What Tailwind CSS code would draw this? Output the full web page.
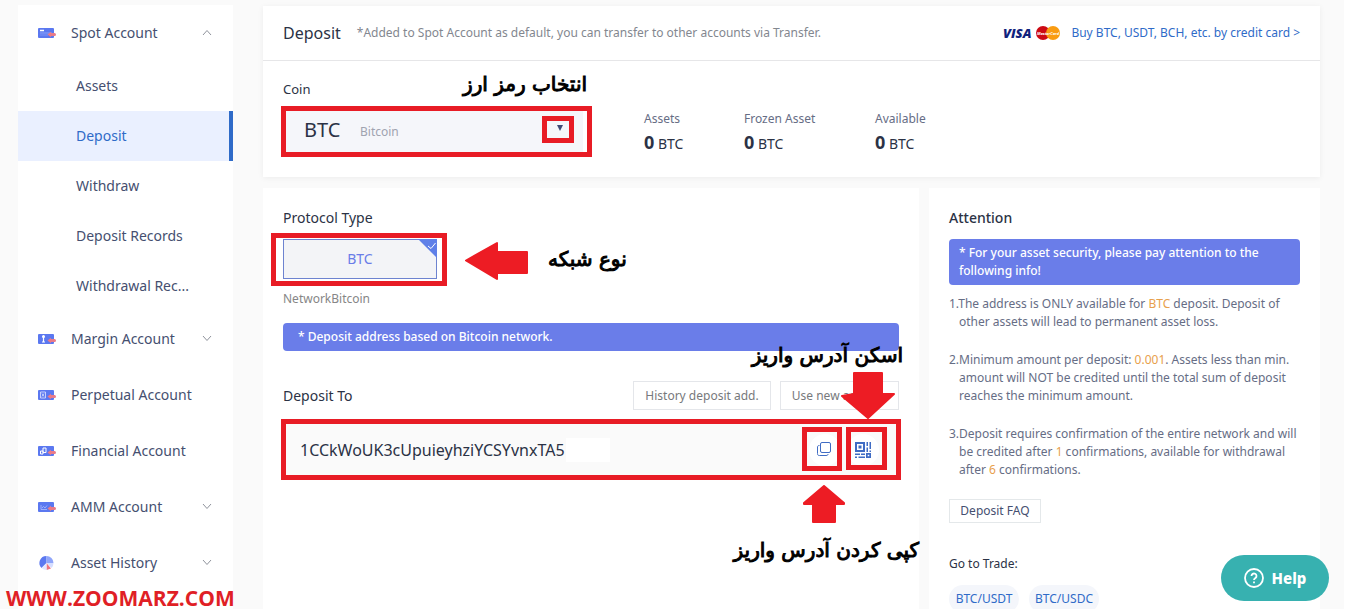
<!DOCTYPE html>
<html lang="en">
<head>
  <meta charset="UTF-8" />
  <meta name="viewport" content="width=device-width, initial-scale=1.0" />
  <title>Deposit - Spot Account</title>
  <script src="https://cdn.jsdelivr.net/npm/@tailwindcss/browser@4"></script>
</head>
<body class="bg-white font-['Noto_Sans','Open_Sans',sans-serif] text-[#2b3245]">
  <div class="relative flex h-screen overflow-hidden mr-3 bg-[#fafafa] pl-[18px] pr-6 gap-[30px]">

    <!-- Sidebar -->
    <nav class="w-[215px] shrink-0 mt-[5px] bg-white text-sm text-[#454f70]">
      <a href="#" class="flex items-center h-14 pl-5 pr-[21px]">
        <svg class="w-[18px] h-3 mr-[15px]" viewBox="0 0 18 12"><rect y="1" width="16" height="10" rx="1" fill="#5b78f0"/><path d="M2 3.500h4" stroke="#fff" stroke-width="1.500"/><path d="M2 6h12" stroke="#8ba2fa"/><path d="M2 8h8" stroke="#7c94f7"/><path d="M9.500 7.500L13 4.800V6h3.500a1.500 1.500 0 010 3H13v1.200z" fill="#e97b88"/></svg>
        Spot Account
        <svg class="ml-auto w-2.5 h-2.5" viewBox="0 0 10 10" fill="none" stroke="#8f939c"><path d="M1 7l4-4.500L9 7"/></svg>
      </a>
      <a href="#" class="flex items-center h-[50px] pl-[58px]">Assets</a>
      <a href="#" class="flex items-center h-[50px] pl-[58px] bg-[#eaf0ff] text-[#2f6bc8] border-r-4 border-[#2f6bc8]">Deposit</a>
      <a href="#" class="flex items-center h-[50px] pl-[58px]">Withdraw</a>
      <a href="#" class="flex items-center h-[50px] pl-[58px]">Deposit Records</a>
      <a href="#" class="flex items-center h-[50px] pl-[58px]">Withdrawal Rec...</a>
      <a href="#" class="flex items-center h-14 pl-5 pr-[21px]">
        <svg class="w-[18px] h-3 mr-[15px]" viewBox="0 0 18 12"><rect y="1" width="16" height="10" rx="1" fill="#5b78f0"/><path d="M5.500 3v6M4 9h3" stroke="#fff" stroke-width="1.200"/><circle cx="5.500" cy="3.500" r="1.500" fill="#fff"/><path d="M9.500 7.500L13 4.800V6h3.500a1.500 1.500 0 010 3H13v1.200z" fill="#e97b88"/></svg>
        Margin Account
        <svg class="ml-auto w-2.5 h-2.5" viewBox="0 0 10 10" fill="none" stroke="#8f939c"><path d="M1 2l4 4.500L9 2"/></svg>
      </a>
      <a href="#" class="flex items-center h-14 pl-5 pr-[21px]">
        <svg class="w-[18px] h-3 mr-[15px]" viewBox="0 0 18 12"><rect y="1" width="16" height="10" rx="1" fill="#5b78f0"/><path d="M2.500 3h5v6h-5zM4 4.500l2 3M6 4.500l-2 3" fill="none" stroke="#dfe5ff" stroke-width=".8"/><path d="M9.500 7.500L13 4.800V6h3.500a1.500 1.500 0 010 3H13v1.200z" fill="#e97b88"/></svg>
        Perpetual Account
      </a>
      <a href="#" class="flex items-center h-14 pl-5 pr-[21px]">
        <svg class="w-[18px] h-3 mr-[15px]" viewBox="0 0 18 12"><rect y="1" width="16" height="10" rx="1" fill="#5b78f0"/><path d="M5 3h3v4.500H5zM2.500 6H5v3H2.500z" fill="none" stroke="#fff"/><path d="M9.500 7.500L13 4.800V6h3.500a1.500 1.500 0 010 3H13v1.200z" fill="#e97b88"/></svg>
        Financial Account
      </a>
      <a href="#" class="flex items-center h-14 pl-5 pr-[21px]">
        <svg class="w-[18px] h-3 mr-[15px]" viewBox="0 0 18 12"><rect y="1" width="16" height="10" rx="1" fill="#5b78f0"/><path d="M3 4v4.500h6M4 7l1.500-1.500L7 7l2-2.500" fill="none" stroke="#b9c6ff" stroke-width=".7"/><path d="M9.500 7.500L13 4.800V6h3.500a1.500 1.500 0 010 3H13v1.200z" fill="#e97b88"/></svg>
        AMM Account
        <svg class="ml-auto w-2.5 h-2.5" viewBox="0 0 10 10" fill="none" stroke="#8f939c"><path d="M1 2l4 4.500L9 2"/></svg>
      </a>
      <a href="#" class="flex items-center h-14 pl-5 pr-[21px]">
        <svg class="w-[18px] h-4 mr-[15px]" viewBox="0 0 18 16"><path d="M8.500 8V1a7 7 0 00-5 12z" fill="#5b78f0"/><path d="M8.500 8V1a7 7 0 017 7z" fill="#8fa5fa"/><path d="M8.500 8h7a7 7 0 01-2 5z" fill="#d5ddff"/><path d="M8.500 8l4.500 5.500-4.500 1.500z" fill="#ee7480"/><path d="M8.500 8v7a7 7 0 01-5-2z" fill="#e3e8ff"/></svg>
        Asset History
        <svg class="ml-auto w-2.5 h-2.5" viewBox="0 0 10 10" fill="none" stroke="#8f939c"><path d="M1 2l4 4.500L9 2"/></svg>
      </a>
    </nav>

    <main class="flex flex-col flex-1 min-w-0 pt-1.5 gap-[11px]">
      <!-- Coin and balances -->
      <section class="bg-white h-[171px] shrink-0 shadow-[0_1px_6px_rgba(0,0,0,0.06)]">
        <header class="flex items-center h-[55px] px-5 border-b border-[#e6e6e8] text-xs">
          <h1 class="text-base">Deposit</h1>
          <p class="ml-4 text-[#83878f]">*Added to Spot Account as default, you can transfer to other accounts via Transfer.</p>
          <svg class="ml-auto w-[58px] h-4" viewBox="0 0 58 16">
            <text x="0" y="13" font-family="Open Sans" font-size="13" font-weight="800" font-style="italic" fill="#10227c">VISA</text>
            <circle cx="40" cy="8" r="7" fill="#cc0a14"/><circle cx="50" cy="8" r="7" fill="#f99c12"/>
            <text x="45" y="10" text-anchor="middle" font-family="Open Sans" font-size="4" font-weight="700" font-style="italic" fill="#fff">MasterCard</text>
          </svg>
          <a href="#" class="ml-2.5 text-[#2f6bc8]">Buy BTC, USDT, BCH, etc. by credit card &gt;</a>
        </header>
        <div class="flex px-5">
          <div class="w-[300px] mt-[19px]">
            <label for="coin" class="block text-[13px] leading-[18px]">Coin</label>
            <div class="relative flex items-center h-11 mt-3 bg-[#f5f6fa] pl-[21px]">
              <select id="coin" class="appearance-none w-14 bg-transparent text-xl leading-7 pb-1"><option>BTC</option></select>
              <span class="text-xs text-[#a0a3b0]">Bitcoin</span>
              <span class="ml-auto mr-5 border-x-[3px] border-x-transparent border-t-[6px] border-t-[#3f4a75] -mt-2"></span>
              <span class="absolute -left-0.5 -top-1 w-[311px] h-[51px] border-5 border-[#e81c25]"></span>
              <span class="absolute left-[259px] top-1.5 w-8 h-[27px] border-5 border-[#e81c25]"></span>
              <span dir="rtl" lang="fa" class="absolute -right-1 -top-10 font-['DejaVu_Sans',sans-serif] text-xl text-black whitespace-nowrap [-webkit-text-stroke:1px_black]">انتخاب رمز ارز</span>
            </div>
          </div>
          <dl class="flex mt-[49px] ml-[61px] text-xs leading-[18px] text-[#666d85]">
            <div class="w-[100px]"><dt>Assets</dt><dd class="text-sm leading-7 text-[#2b3245]"><b class="text-lg leading-7">0</b> BTC</dd></div>
            <div class="w-[131px]"><dt>Frozen Asset</dt><dd class="text-sm leading-7 text-[#2b3245]"><b class="text-lg leading-7">0</b> BTC</dd></div>
            <div><dt>Available</dt><dd class="text-sm leading-7 text-[#2b3245]"><b class="text-lg leading-7">0</b> BTC</dd></div>
          </dl>
        </div>
      </section>

      <div class="flex flex-1 gap-2.5">
        <!-- Deposit address -->
        <section class="relative flex-1 bg-white px-5 pt-5">
          <h2 class="text-sm">Protocol Type</h2>
          <div class="relative w-[154px] mt-[11px]">
            <button class="block w-full h-10 bg-[#f3f4f7] border border-[#6d83d0] text-sm text-[#6a7ce8]">BTC</button>
            <svg class="absolute top-0 right-0 w-5 h-5" viewBox="0 0 20 20"><path d="M1 0h19v19z" fill="#5f80e8"/><path d="M11 7l3 2.500L18.500 4" fill="none" stroke="#fff"/></svg>
            <span class="absolute -left-3 -top-1.5 w-[176px] h-[53px] border-5 border-[#e81c25]"></span>
            <svg class="absolute left-[181px] top-0.5 w-16 h-10" viewBox="0 0 64 40"><path d="M2 19.500L33 2v9h30v21H33v6z" fill="#ed1c24" stroke="#ed1c24" stroke-width="2" stroke-linejoin="round"/></svg>
            <span dir="rtl" lang="fa" class="absolute left-[265px] top-1.5 font-['DejaVu_Sans',sans-serif] text-xl text-black whitespace-nowrap [-webkit-text-stroke:1px_black]">نوع شبکه</span>
          </div>
          <p class="mt-[11px] text-xs leading-[18px] text-[#868686]">NetworkBitcoin</p>
          <p class="mt-[15px] h-7 px-[15px] rounded-sm bg-[#6a7de9] text-white text-xs leading-7 font-medium">* Deposit address based on Bitcoin network.</p>

          <div class="relative flex items-center mt-[30px] gap-[9px]">
            <label for="address" class="mr-auto text-sm">Deposit To</label>
            <button class="w-[138px] h-[29px] border border-[#e4e6ea] text-xs text-[#77797c]">History deposit add.</button>
            <button class="w-[119px] h-[29px] border border-[#e4e6ea] text-xs text-[#77797c] whitespace-nowrap overflow-hidden">Use new address</button>
            <span dir="rtl" lang="fa" class="absolute -right-1 -top-10 font-['DejaVu_Sans',sans-serif] text-xl text-black whitespace-nowrap [-webkit-text-stroke:1px_black]">اسکن آدرس واریز</span>
            <svg class="absolute right-1 -top-2.5 w-[54px] h-12 z-10" viewBox="0 0 54 48"><path d="M13 2h28v21h12L27 47 1 25l12-2z" fill="#ed1c24" stroke="#ed1c24" stroke-width="2" stroke-linejoin="round"/></svg>
          </div>

          <div class="relative flex items-center h-[57px] mt-[11px] bg-[#fafafa] pl-[17px]">
            <input id="address" readonly value="1CCkWoUK3cUpuieyhziYCSYvnxTA5" class="w-[266px] bg-transparent text-base outline-none" />
            <span class="w-11 h-6 bg-white"></span>
            <button aria-label="Copy address" class="ml-auto flex items-center justify-center w-8 h-8 rounded-full bg-white">
              <svg class="w-4 h-4 mr-0.5 mb-0.5" viewBox="0 0 16 16" fill="none" stroke="#3f6cc4"><rect x="4.500" y="1.500" width="10" height="10" rx="1.500"/><path d="M3.500 4.500c-1.500 0-2 .5-2 1.500v6.500c0 1.500.5 2 2 2H10c1.500 0 2-.5 2-1.500"/></svg>
            </button>
            <button aria-label="Show QR code" class="ml-1.5 mr-5 flex items-center justify-center w-8 h-8 rounded-full bg-white">
              <svg class="w-4 h-4" viewBox="0 0 16 16" fill="#3f6cc4"><path d="M0 0h10v10H0zM2 2v6h6V2z" fill-rule="evenodd"/><path d="M3.500 3.500h3v3h-3zM11.500 0H13v4h-1.500zM14.500 0H16v7h-1.500zM11.500 5.500H13V10h-1.500zM14.500 8.500H16V10h-1.500zM0 11.500h5V13H0zM6 11.500h4V13H6zM0 14.500h2V16H0zM3.500 14.500H10V16H3.500z"/><path d="M11 11h5v5h-5zM12.700 12.700v1.600h1.600v-1.600z" fill-rule="evenodd"/></svg>
            </button>
            <span class="absolute -inset-0.5 border-5 border-[#e81c25]"></span>
            <span class="absolute right-[57px] top-1.5 w-10 h-11 border-5 border-[#e81c25]"></span>
            <span class="absolute right-3 top-1.5 w-[41px] h-[43px] border-5 border-[#e81c25]"></span>
            <svg class="absolute right-[54px] top-16 w-[42px] h-[38px]" viewBox="0 0 42 38"><path d="M21 1L1 18v1h9v18h22V19h9v-1z" fill="#ed1c24" stroke="#ed1c24" stroke-width="2" stroke-linejoin="round"/></svg>
            <span dir="rtl" lang="fa" class="absolute -right-5 top-[115px] font-['DejaVu_Sans',sans-serif] text-xl text-black whitespace-nowrap [-webkit-text-stroke:1px_black]">کپی کردن آدرس واریز</span>
          </div>
        </section>

        <!-- Notes -->
        <aside class="w-[391px] shrink-0 bg-white px-5 pt-5 text-xs leading-[18px] text-[#666d85]">
          <h2 class="text-sm font-medium text-[#2b3245]">Attention</h2>
          <p class="mt-[11px] px-2.5 py-[5px] rounded bg-[#6a7de9] text-white font-medium">* For your asset security, please pay attention to the following info!</p>
          <ol class="mt-2.5 space-y-5 pl-2.5 -indent-2.5">
            <li>1.The address is ONLY available for <span class="text-[#e8a04c]">BTC</span> deposit. Deposit of<br>other assets will lead to permanent asset loss.</li>
            <li>2.Minimum amount per deposit: <span class="text-[#e8a04c]">0.001</span>. Assets less than min.<br>amount will NOT be credited until the total sum of deposit<br>reaches the minimum amount.</li>
            <li>3.Deposit requires confirmation of the entire network and will<br>be credited after <span class="text-[#e8a04c]">1</span> confirmations, available for withdrawal<br>after <span class="text-[#e8a04c]">6</span> confirmations.</li>
          </ol>
          <button class="block mt-5 w-[92px] h-6 border border-[#e4e8ea] text-[#454f70]">Deposit FAQ</button>
          <p class="mt-8 text-[#2b3245]">Go to Trade:</p>
          <div class="flex gap-2.5 mt-3 text-[#2f6bc8]">
            <a href="#" class="flex items-center justify-center w-[70px] h-7 rounded-full bg-[#f4f6fb]">BTC/USDT</a>
            <a href="#" class="flex items-center justify-center w-[70px] h-7 rounded-full bg-[#f4f6fb]">BTC/USDC</a>
          </div>
        </aside>
      </div>
    </main>

    <button class="absolute right-[15px] bottom-2 flex items-center justify-center gap-2 w-[108px] h-[46px] rounded-full bg-[#37b1b0] text-white text-[15px] font-extrabold">
      <svg class="w-5 h-5" viewBox="0 0 20 20" fill="none" stroke="#fff" stroke-width="1.800"><circle cx="10" cy="10" r="9"/><path d="M7.500 8a2.500 2.500 0 114 2c-1 .7-1.500 1-1.500 2M10 13.500v1.700"/></svg>
      Help
    </button>
    <p class="absolute left-1.5 bottom-0 text-[21px] leading-none font-bold text-[#e01f26] font-['Open_Sans',sans-serif]">WWW.ZOOMARZ.COM</p>
  </div>
</body>
</html>
